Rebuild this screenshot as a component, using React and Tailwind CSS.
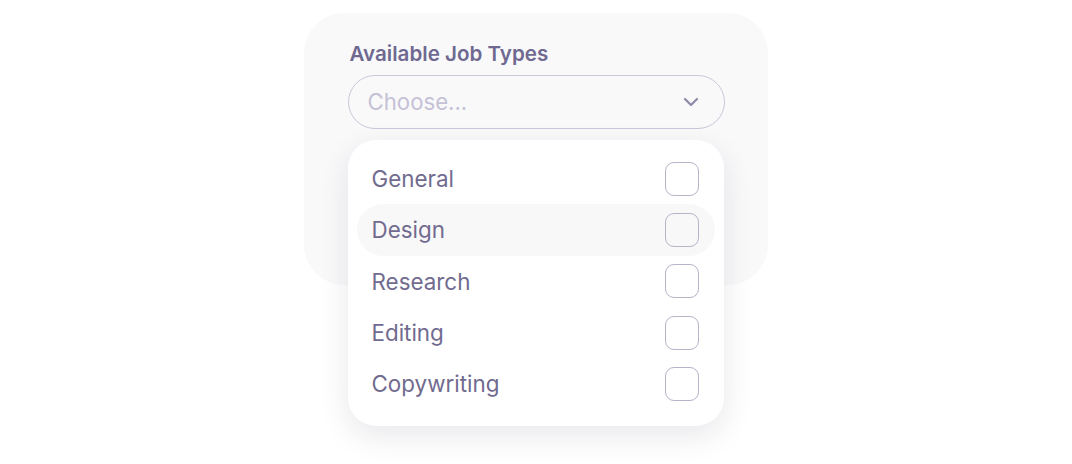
import React from 'react';

const options = ['General', 'Design', 'Research', 'Editing', 'Copywriting'];

const App = () => {
  const hovered = 'Design';

  return (
    <div className="w-[1072px] h-[464px] bg-white flex justify-center pt-[13px]" style={{ fontFamily: 'Inter, "Liberation Sans", sans-serif' }}>
      <div className="relative ml-[-1px] w-[464px] h-[272px] rounded-[40px] bg-[#f9f9fa] px-[44px] pt-[28px]">
        <div className="ml-[2px] text-[20.6px] leading-[25px] font-semibold text-[#6f6991]">Available Job Types</div>
        <div className="mt-[9px] h-[54px] w-[377px] rounded-full border border-[#cbc7da] flex items-center justify-between pl-[19px] pr-[25px]">
          <span className="text-[22.2px] text-[#c5c1d6]">Choose...</span>
          <svg width="16" height="10" viewBox="0 0 16 10" fill="none">
            <path d="M2 2l6 6 6-6" stroke="#8f8aa8" strokeWidth="2.2" strokeLinecap="round" strokeLinejoin="round" />
          </svg>
        </div>

        <div className="absolute left-[44px] top-[127px] w-[376px] rounded-[28px] bg-white shadow-[0_10px_30px_rgba(30,30,60,0.10)] px-[9px] pt-[13px] pb-[16px]">
          {options.map(opt => (
            <div
              key={opt}
              className={`h-[51.4px] flex items-center justify-between pl-[15px] pr-[16px] rounded-full ${opt === hovered ? 'bg-[#f8f8f9]' : ''}`}
            >
              <span className="text-[22.4px] text-[#716b8f]">{opt}</span>
              <span className="w-[34px] h-[34px] rounded-[9px] border border-[#b7b3c8]" />
            </div>
          ))}
        </div>
      </div>
    </div>
  );
};

export default App;
